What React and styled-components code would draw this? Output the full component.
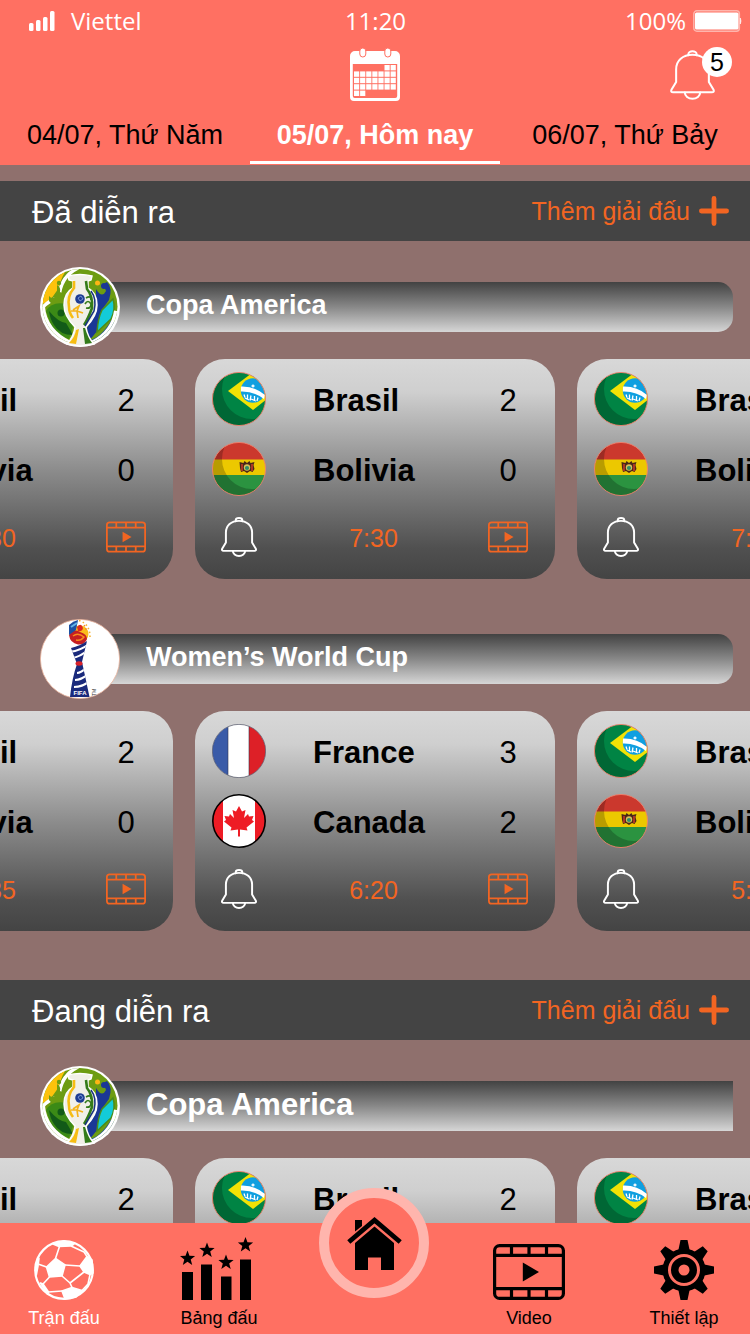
import React, { useId } from "react";
import styled, { createGlobalStyle } from "styled-components";

const coral = "#ff7062";
const orange = "#f26522";
const charcoal = "#444444";
const silver = "#d8d8d8";

const GlobalStyle = createGlobalStyle`
  * { box-sizing: border-box; }
  body {
    margin: 0;
    background: #8f706d;
    font-family: "Liberation Sans", Arial, sans-serif;
    color: #000;
  }
  h1, h2, h3, p { margin: 0; }
  button {
    padding: 0;
    border: 0;
    background: none;
    color: inherit;
    font: inherit;
    cursor: pointer;
  }
  svg { display: block; flex: none; }
`;

const Screen = styled.div`
  display: flex;
  flex-direction: column;
  height: 100vh;
  overflow: hidden;
`;

const Header = styled.header`
  flex: none;
  padding-bottom: 1px;
  background: ${coral};
`;

const StatusBar = styled.div`
  display: grid;
  grid-template-columns: 1fr auto 1fr;
  align-items: center;
  height: 42px;
  padding: 0 8px 0 29px;
  color: #fff;
  font: 24px/32px "Open Sans", "Noto Sans", sans-serif;
`;

const StatusGroup = styled.div`
  display: flex;
  align-items: center;
  justify-content: ${(p) => (p.$end ? "flex-end" : "flex-start")};
  gap: ${(p) => (p.$end ? 7 : 16)}px;
`;

const StatusTime = styled.time`
  padding-right: 20px;
`;

const ToolRow = styled.div`
  display: grid;
  grid-template-columns: 1fr auto 1fr;
  align-items: center;
  height: 64px;
  padding: 2px 18px 0;
`;

const IconButton = styled.button`
  display: grid;
  place-items: center;
`;

const AlertButton = styled(IconButton)`
  position: relative;
  justify-self: end;
  padding-right: 17px;
`;

const Badge = styled.span`
  position: absolute;
  top: -3px;
  right: 0;
  width: 30px;
  height: 30px;
  border-radius: 50%;
  background: #fff;
  font-size: 25px;
  line-height: 30px;
  text-align: center;
`;

const Tabs = styled.nav`
  display: grid;
  grid-template-columns: repeat(3, 1fr);
`;

const Tab = styled.button`
  height: 58px;
  padding-top: 3px;
  border-bottom: 3px solid ${(p) => (p.$active ? "#fff" : "transparent")};
  color: ${(p) => (p.$active ? "#fff" : "#000")};
  font-size: 27px;
  font-weight: ${(p) => (p.$active ? 700 : 400)};
  white-space: nowrap;
`;

const Feed = styled.main`
  flex: 1;
  min-height: 0;
  padding-top: 16px;
  overflow-x: hidden;
  overflow-y: auto;
  scrollbar-width: none;
`;

const Section = styled.section`
  padding-bottom: 49px;
`;

const SectionBar = styled.div`
  display: flex;
  align-items: center;
  justify-content: space-between;
  height: 60px;
  padding: 0 21px 0 32px;
  background: ${charcoal};
`;

const SectionTitle = styled.h2`
  padding-top: 4px;
  color: #fff;
  font-size: 31px;
  font-weight: 400;
`;

const AddButton = styled.button`
  display: flex;
  align-items: center;
  gap: 9px;
  color: ${orange};
  font-size: 25px;
`;

const League = styled.article`
  padding-top: ${(p) => (p.$first ? 26 : 40)}px;
`;

const LeagueHead = styled.div`
  display: flex;
  align-items: center;
  padding: 0 17px 0 40px;
`;

const LeagueLogo = styled.div`
  position: relative;
  z-index: 1;
  width: 80px;
  height: 80px;
`;

const LeagueBar = styled.div`
  display: flex;
  flex: 1;
  align-items: center;
  height: 50px;
  margin-left: -40px;
  padding: 0 16px 3px 66px;
  border-radius: 0 ${(p) => (p.$large ? "0 0" : "15px 15px")} 0;
  background: linear-gradient(#424242, #888 50%, #d6d6d6);
`;

const LeagueTitle = styled.h3`
  color: #fff;
  font-size: ${(p) => (p.$large ? 31 : 27)}px;
  font-weight: 700;
`;

const Carousel = styled.div`
  display: flex;
  justify-content: center;
  gap: 22px;
  padding-top: 12px;
  overflow: hidden;
`;

const Card = styled.div`
  flex: none;
  width: 360px;
  height: 220px;
  padding: 5px 20px 0 17px;
  border-radius: 30px;
  background: linear-gradient(${silver}, #cfcfcf 15%, #8b8b8b 51%, #505050 86%, ${charcoal});
`;

const CardRow = styled.div`
  display: grid;
  grid-template-columns: 54px 1fr 54px;
  align-items: center;
  justify-items: center;
  height: ${(p) => (p.$footer ? 65 : 70)}px;
`;

const TeamName = styled.span`
  justify-self: start;
  padding: 3px 0 0 47px;
  font-size: 31px;
  font-weight: 700;
  white-space: nowrap;
`;

const Score = styled.span`
  padding-top: 3px;
  font-size: 31px;
`;

const Kickoff = styled.time`
  padding-top: 3px;
  color: ${orange};
  font-size: 25px;
`;

const BottomNav = styled.nav`
  display: flex;
  flex: none;
  justify-content: space-between;
  height: 111px;
  padding: 13px 22px 0 20px;
  background: ${coral};
`;

const NavLink = styled.a`
  display: flex;
  flex-direction: column;
  align-items: center;
  gap: 6px;
  width: 88px;
  color: ${(p) => (p.$active ? "#fff" : "#000")};
  font-size: 18px;
  line-height: 24px;
  text-decoration: none;
  white-space: nowrap;
`;

const NavIcon = styled.span`
  display: flex;
  align-items: flex-end;
  height: 64px;
`;

const HomeSlot = styled.div`
  position: relative;
  width: 88px;
`;

const HomeLink = styled.a`
  position: absolute;
  top: -48px;
  left: -11px;
  display: grid;
  place-items: center;
  width: 110px;
  height: 110px;
  border: 10px solid #ffb5ad;
  border-radius: 50%;
  background: ${coral};
  color: #000;
`;

const SignalIcon = () => (
  <svg width="26" height="20" viewBox="0 0 26 20" fill="#fff" aria-hidden="true">
    <rect x="0" y="12" width="4.5" height="8" rx="1.5" />
    <rect x="7" y="9" width="4.5" height="11" rx="1.5" />
    <rect x="14" y="6" width="4.5" height="14" rx="1.5" />
    <rect x="21" y="0" width="4.5" height="20" rx="1.5" />
  </svg>
);

const BatteryIcon = () => (
  <svg width="49" height="22" viewBox="0 0 49 22" aria-hidden="true">
    <rect x="0.8" y="0.8" width="45.6" height="20.4" rx="3" fill="none" stroke="#ffb5ad" strokeWidth="1.4" />
    <rect x="2" y="2.5" width="43.5" height="17" rx="1.5" fill="#fff" />
    <path d="M47.3 8q1.4 3 0 6z" fill="#fff" stroke="#fff" strokeWidth="0.6" />
  </svg>
);

const CalendarIcon = () => {
  const cells = [];
  for (let row = 0; row < 5; row += 1) {
    for (let col = 0; col < 7; col += 1) {
      if ((row === 0 && col < 5) || (row === 4 && col > 1)) continue;
      cells.push(
        <rect key={`${row}-${col}`} x={4 + col * 6.1} y={17 + row * 6.4} width="5.2" height="5.4" />
      );
    }
  }
  return (
    <svg width="50" height="54" viewBox="0 0 50 54" fill="#fff" aria-hidden="true">
      <path d="M5 3h40a5 5 0 0 1 5 5v41a4 4 0 0 1-4 4H4a4 4 0 0 1-4-4V8a5 5 0 0 1 5-5zM2.8 16v32a2 2 0 0 0 2 2h40.400a2 2 0 0 0 2-2V16z" fillRule="evenodd" />
      {cells}
      <rect x="9.800" y="0" width="6" height="9" rx="3" stroke={coral} strokeWidth="1" />
      <rect x="34.800" y="0" width="6" height="9" rx="3" stroke={coral} strokeWidth="1" />
    </svg>
  );
};

const BellIcon = ({ width = 45, height = 50, weight = 2 }) => (
  <svg width={width} height={height} viewBox="0 0 44 50" preserveAspectRatio="none" fill="none" stroke="#fff" strokeWidth={weight} strokeLinejoin="round" strokeLinecap="round" aria-hidden="true">
    <path d="M22 4.800C12.500 4.800 6 10.500 6 19.500V32L1.400 39.800Q.6 42.300 3 42.300H41Q43.400 42.300 42.600 39.800L38 32V19.500C38 10.500 31.500 4.800 22 4.800Z" />
    <path d="M18 5.300V4a4 2.800 0 0 1 8 0V5.300" />
    <path d="M14.500 42.500a7.500 6.300 0 0 0 15 0" />
  </svg>
);

const PlusIcon = () => (
  <svg width="30" height="30" viewBox="0 0 30 30" stroke={orange} strokeWidth="4.800" strokeLinecap="round" aria-hidden="true">
    <path d="M15 2.400V27.600M2.400 15H27.600" />
  </svg>
);

const FilmIcon = ({ width = 72, height = 56 }) => (
  <svg width={width} height={height} viewBox="0 0 72 56" fill="none" stroke="currentColor" strokeWidth="3.200" aria-hidden="true">
    <rect x="1.600" y="1.600" width="68.800" height="52.800" rx="5" />
    <path d="M1 11.300H71M1 44.700H71M18.500 1V11M36 1V11M53.500 1V11M18.500 45V55M36 45V55M53.500 45V55" />
    <path d="M29.800 18.500V37.500L46 28Z" fill="currentColor" stroke="none" />
  </svg>
);

const CardFilmButton = styled(IconButton)`
  color: ${orange};
`;

const BallIcon = () => (
  <svg width="60" height="60" viewBox="0 0 60 60" fill="none" stroke="#fff" strokeWidth="1.600" strokeLinejoin="round" aria-hidden="true">
    <circle cx="30" cy="30" r="28.800" strokeWidth="2.200" />
    <g fill="#fff">
      <path d="M12.500 27L21.500 18.500L31 25L28 36L15.500 37Z" />
      <path d="M46 26L53 16.500L58 20L59 33L56 34.500L50 32Z" />
      <path d="M19 4L30 1L40 4L37 6L25 6.500Z" />
      <path d="M28 51L38 47.500L48 50.500L42 57L31 59Z" />
      <path d="M1.500 27L5 18.500L4 26L2.300 35Z" />
      <path d="M6.500 43L9 44L14.500 52L13.500 54Z" />
    </g>
    <path d="M21.500 18.500L25.500 6.500M37 6L50 12L53 16.500M31 25L46 26M28 36L36 43L50 32M36 43L38 47.500M15.500 37L9 44M12.500 27L4 24M56 34.500L54 44L48 50.500M14.500 52L28 51" />
  </svg>
);

const star = (cx, cy, r) =>
  Array.from({ length: 10 }, (_, i) => {
    const radius = i % 2 ? r * 0.42 : r;
    const angle = (Math.PI / 5) * i - Math.PI / 2;
    return `${(cx + radius * Math.cos(angle)).toFixed(2)},${(cy + radius * Math.sin(angle)).toFixed(2)}`;
  }).join(" ");

const StandingsIcon = () => (
  <svg width="78" height="64" viewBox="0 -2 78 64" aria-hidden="true">
    <path d="M2 34H13V62H2ZM21 26.500H32V62H21ZM41 38.500H51.500V62H41ZM60 21.500H71V62H60Z" />
    <polygon points={star(7.5, 20.5, 8)} />
    <polygon points={star(27, 12.5, 8)} />
    <polygon points={star(46, 24.5, 8)} />
    <polygon points={star(65.5, 7, 8)} />
  </svg>
);

const HomeIcon = () => (
  <svg width="55" height="53" viewBox="0 0 55 53" aria-hidden="true">
    <path d="M8 3H15V9L8 14.500Z" />
    <path d="M1.800 25L27.500 3.200L53.200 25" fill="none" stroke="#000" strokeWidth="4.800" />
    <path d="M27.500 9.500L47 26V53H34V40.500H21V53H8V26Z" />
  </svg>
);

const GearIcon = () => (
  <svg width="60" height="60" viewBox="0 0 60 60" aria-hidden="true">
    {[0, 45, 90, 135, 180, 225, 270, 315].map((angle) => (
      <path key={angle} d="M26.500 0H33.500L36 12H24Z" transform={`rotate(${angle} 30 30)`} />
    ))}
    <circle cx="30" cy="30" r="21.500" />
    <circle cx="30" cy="30" r="14.500" fill="none" stroke={coral} strokeWidth="3" />
    <circle cx="30" cy="30" r="5.500" fill={coral} />
  </svg>
);

const Shade = () => (
  <path d="M0 0H54V54H0ZM40-13A30 30 0 1 0 40 47A30 30 0 1 0 40-13Z" fillRule="evenodd" fillOpacity="0.22" />
);

const flagArt = {
  Brasil: (
    <>
      <path d="M0 0H54V54H0Z" fill="#008444" />
      <Shade />
      <path d="M16 19L38 2.500L64 20L41 38Z" fill="#f2e205" />
      <circle cx="41" cy="18.500" r="12.200" fill="#0f9fe0" />
      <path d="M29 14.500Q43 14 53 23L52 27Q42 19 28.800 19.500Z" fill="#fff" />
      <path d="M32 22.500l1 3M35.500 22.500v5M39 23.500l-1 5M42.500 24v5M46 25.500l-1 3.500M33 26l4 2M39 27l5 2M41 12.500v3M39.500 14h3" fill="none" stroke="#fff" strokeWidth="1.300" />
    </>
  ),
  Bolivia: (
    <>
      <path d="M0 0H54V18H0Z" fill="#cb382d" />
      <path d="M0 17.500H54V33H0Z" fill="#ecc800" />
      <path d="M0 33H54V54H0Z" fill="#2b9340" />
      <Shade />
      <path d="M27.500 20l4 1 1-2 2.500 2 2.500-2 1 2 4-1-1 3 1 4-2 3-2.500-1-3 2-3-2-3 1-1-4z" fill="#4b2818" />
      <path d="M30 22v7M40 22v7" stroke="#d43b2b" strokeWidth="1.400" />
      <circle cx="35" cy="25.500" r="3.200" fill="#d8c05a" />
      <circle cx="35" cy="26" r="2.100" fill="#2f8f6b" />
    </>
  ),
  France: (
    <>
      <path d="M0 0H54V54H0Z" fill="#fff" />
      <path d="M0 0H16V54H0Z" fill="#3a5ba8" />
      <path d="M37 0H54V54H37Z" fill="#dd2027" />
      <path d="M16 0V54M37 0V54" stroke="#33384d" strokeWidth="0.600" />
    </>
  ),
  Canada: (
    <>
      <path d="M0 0H54V54H0Z" fill="#fff" />
      <path d="M0 0H11V54H0ZM43 0H54V54H43Z" fill="#ee1c25" />
      <path d="M27 12L30 17.500L33.500 16L32 24L36 20L37 22.500L41.500 22L40 26L42 27.500L34.500 33.500L35.500 36.500L28 35.500V42.500H26V35.500L18.500 36.500L19.500 33.500L12 27.500L14 26L12.500 22L17 22.500L18 20L22 24L20.500 16L24 17.500Z" fill="#ee1c25" />
    </>
  ),
};

const flagRing = {
  Brasil: ["#f0806c", 0.9],
  Bolivia: ["#f0806c", 0.9],
  France: ["#55586a", 0.7],
  Canada: ["#000", 1.6],
};

const Flag = ({ team }) => {
  const id = useId();
  const [color, weight] = flagRing[team];
  return (
    <svg width="54" height="54" viewBox="0 0 54 54" role="img" aria-label={team}>
      <clipPath id={id}>
        <circle cx="27" cy="27" r="26.600" />
      </clipPath>
      <g clipPath={`url(#${id})`}>{flagArt[team]}</g>
      <circle cx="27" cy="27" r={27 - weight / 2} fill="none" stroke={color} strokeWidth={weight} />
    </svg>
  );
};

const CopaLogo = () => {
  const id = useId();
  return (
    <svg width="80" height="80" viewBox="0 0 80 80" aria-hidden="true">
      <circle cx="40" cy="40" r="40" fill="#fff" />
      <clipPath id={id}>
        <circle cx="40" cy="39.500" r="37.500" />
      </clipPath>
      <g clipPath={`url(#${id})`}>
        <path d="M0 0H80V80H0Z" fill="#6d9c12" />
        <path d="M0 0H29Q22 8 20 17Q14 33 1 38Z" fill="#fdc20c" />
        <path d="M2 41Q9 33 19 31Q20 10 38 1" fill="none" stroke="#fff" strokeWidth="3.500" />
        <path d="M9 29Q13 34 17 27L17 18Q21 20 20 25L24 27L22 37Q12 39 9 34Z" fill="#6d9c12" />
        <circle cx="19" cy="16" r="2.200" fill="#6d9c12" />
        <path d="M6 44Q12 34 26 37L33 60L29 72L14 66Z" fill="#3b8a16" />
        <path d="M9 44Q18 55 26 56L33 68Q20 68 14 58Q10 52 9 44Z" fill="#125a18" />
        <circle cx="21" cy="46" r="3.500" fill="#125a18" />
        <path d="M2 40Q4 64 30 77" fill="none" stroke="#fff" strokeWidth="6" />
        <circle cx="57.500" cy="16" r="2.500" fill="#fdb515" />
        <path d="M56 22Q62 32 66 24Q62 16 67 15Q73 21 69 33L61 44L58 63L49 74L47 61L56 45Z" fill="#1a3796" />
        <circle cx="64" cy="19" r="3" fill="#1a3796" />
        <path d="M49 73Q60 72 72 52L76 58L60 76Z" fill="#2a5c8c" />
        <path d="M73 32Q76 42 71 52L57 65Q58 51 62 43Z" fill="#13cbd8" stroke="#4b8c1a" strokeWidth="1.500" />
        <path d="M77 44Q74 66 52 77" fill="none" stroke="#fff" strokeWidth="6" />
      </g>
      <path d="M28 9Q40 6 52 9L51 13L48 14L48 21Q57 26 57 38Q57 49 46 60Q47 69 54 77Q40 81 27 77Q34 69 35 60Q24 49 24 38Q24 26 33 21L33 14L29 13Z" fill="#f1f0e8" stroke="#fff" strokeWidth="1.500" />
      <path d="M34 14L34 21Q27 29 29 40Q29 46 33 51" fill="none" stroke="#f7bd13" strokeWidth="2.600" />
      <path d="M46 14L47 22Q53 29 52 41Q48 52 44 58" fill="none" stroke="#347b1a" strokeWidth="2.600" />
      <path d="M51 24Q57 32 54 44L45 59" fill="none" stroke="#17347f" strokeWidth="1.500" />
      <path d="M29 76Q35 70 36 63L39 62L36 77Z" fill="#f7bd13" />
      <path d="M33 43L39 39L37 44L43 46M37 44L31 44M37 44L38 51" fill="none" stroke="#f4b31b" strokeWidth="1.700" />
      <path d="M43 61L45 61Q48 71 52 76L45 77Z" fill="#347b1a" />
      <path d="M46 31Q51 28 51 33M45 37Q48 32 51 37Q51 42 46 41" fill="none" stroke="#347b1a" strokeWidth="1.700" />
      <circle cx="40" cy="32" r="4.800" fill="#1d3c94" />
      <path d="M38 31l3-2 2 3-3 2z" fill="none" stroke="#8aa5dc" strokeWidth="0.800" />
    </svg>
  );
};

const WorldCupLogo = () => {
  const id = useId();
  return (
    <svg width="80" height="80" viewBox="0 0 80 80" aria-hidden="true">
      <circle cx="40" cy="40" r="39.600" fill="#fff" stroke="#e9b29c" strokeWidth="0.800" />
      <circle cx="40" cy="15" r="8.500" fill="#fbbc1c" />
      <path d="M29 16Q33 9 40 13Q47 15 47 20Q45 26 38 25.500Q30 24 29 16Z" fill="#c61f22" />
      <path d="M37 8Q41 3 43 9Q42 13 38 12Z" fill="#dd2a1f" />
      <path d="M33 17Q38 13 44 18Q41 22 36 21" fill="none" stroke="#f78c1d" strokeWidth="1.500" />
      <path d="M29 16V6Q33 2 38 1L36 11Z" fill="#1e50a2" />
      <path d="M31 8L37 4" stroke="#62b5e8" strokeWidth="2" />
      <path d="M39 1.500Q50 5 50 18" fill="none" stroke="#f8b333" strokeWidth="1.600" strokeDasharray="1.500 2.500" />
      <path d="M44 6Q46 9 46.500 12" fill="none" stroke="#f07a21" strokeWidth="1.200" strokeDasharray="1.500 2" />
      <clipPath id={id}>
        <path d="M31 29Q40 27 47 22L42 43Q46 61 49.500 78H30Q32 59 37 45Z" />
      </clipPath>
      <g clipPath={`url(#${id})`}>
        <path d="M28 20H52V80H28Z" fill="#1a2a7c" />
        <path d="M29 33Q40 32 49 25M32 39Q40 38 48 31M37 54Q41 54 47 48M35 61Q41 61 50 54M34 68Q43 68 51 61" fill="none" stroke="#fff" strokeWidth="2.200" />
      </g>
      <ellipse cx="39" cy="44.500" rx="3.500" ry="2.200" fill="#d92128" />
      <text x="40" y="75.500" textAnchor="middle" fill="#fff" fontSize="6" fontWeight="700">FIFA</text>
      <text transform="translate(56 77) rotate(-90)" fill="#333" fontSize="5">TM</text>
    </svg>
  );
};

const brasilBolivia = (time) => ({
  time,
  teams: [
    { name: "Brasil", score: 2 },
    { name: "Bolivia", score: 0 },
  ],
});

const sections = [
  {
    title: "Đã diễn ra",
    leagues: [
      {
        name: "Copa America",
        Logo: CopaLogo,
        matches: [brasilBolivia("7:30"), brasilBolivia("7:30"), brasilBolivia("7:30")],
      },
      {
        name: "Women’s World Cup",
        Logo: WorldCupLogo,
        matches: [
          brasilBolivia("5:35"),
          {
            time: "6:20",
            teams: [
              { name: "France", score: 3 },
              { name: "Canada", score: 2 },
            ],
          },
          brasilBolivia("5:35"),
        ],
      },
    ],
  },
  {
    title: "Đang diễn ra",
    leagues: [
      {
        name: "Copa America",
        large: true,
        Logo: CopaLogo,
        matches: [brasilBolivia("7:30"), brasilBolivia("7:30"), brasilBolivia("7:30")],
      },
    ],
  },
];

const MatchCard = ({ match }) => (
  <Card>
    {match.teams.map((team) => (
      <CardRow key={team.name}>
        <Flag team={team.name} />
        <TeamName>{team.name}</TeamName>
        <Score>{team.score}</Score>
      </CardRow>
    ))}
    <CardRow $footer>
      <IconButton aria-label="Nhắc tôi">
        <BellIcon width={36} height={40} weight={2.4} />
      </IconButton>
      <Kickoff>{match.time}</Kickoff>
      <CardFilmButton aria-label="Xem video">
        <FilmIcon width={40} height={32} />
      </CardFilmButton>
    </CardRow>
  </Card>
);

const NavItem = ({ label, icon, active }) => (
  <NavLink href="#" $active={active} aria-current={active ? "page" : undefined}>
    <NavIcon>{icon}</NavIcon>
    {label}
  </NavLink>
);

export default function App() {
  return (
    <>
      <GlobalStyle />
      <Screen>
        <Header>
          <StatusBar>
            <StatusGroup>
              <SignalIcon />
              <span>Viettel</span>
            </StatusGroup>
            <StatusTime>11:20</StatusTime>
            <StatusGroup $end>
              <span>100%</span>
              <BatteryIcon />
            </StatusGroup>
          </StatusBar>
          <ToolRow>
            <span />
            <IconButton aria-label="Lịch">
              <CalendarIcon />
            </IconButton>
            <AlertButton aria-label="Thông báo">
              <BellIcon />
              <Badge>5</Badge>
            </AlertButton>
          </ToolRow>
          <Tabs>
            <Tab>04/07, Thứ Năm</Tab>
            <Tab $active>05/07, Hôm nay</Tab>
            <Tab>06/07, Thứ Bảy</Tab>
          </Tabs>
        </Header>

        <Feed>
          {sections.map((section) => (
            <Section key={section.title}>
              <SectionBar>
                <SectionTitle>{section.title}</SectionTitle>
                <AddButton>
                  Thêm giải đấu
                  <PlusIcon />
                </AddButton>
              </SectionBar>
              {section.leagues.map(({ name, large, Logo, matches }, index) => (
                <League key={name} $first={index === 0}>
                  <LeagueHead>
                    <LeagueLogo>
                      <Logo />
                    </LeagueLogo>
                    <LeagueBar $large={large}>
                      <LeagueTitle $large={large}>{name}</LeagueTitle>
                    </LeagueBar>
                  </LeagueHead>
                  <Carousel>
                    {matches.map((match, i) => (
                      <MatchCard key={i} match={match} />
                    ))}
                  </Carousel>
                </League>
              ))}
            </Section>
          ))}
        </Feed>

        <BottomNav>
          <NavItem label="Trận đấu" icon={<BallIcon />} active />
          <NavItem label="Bảng đấu" icon={<StandingsIcon />} />
          <HomeSlot>
            <HomeLink href="#" aria-label="Trang chủ">
              <HomeIcon />
            </HomeLink>
          </HomeSlot>
          <NavItem label="Video" icon={<FilmIcon />} />
          <NavItem label="Thiết lập" icon={<GearIcon />} />
        </BottomNav>
      </Screen>
    </>
  );
}
